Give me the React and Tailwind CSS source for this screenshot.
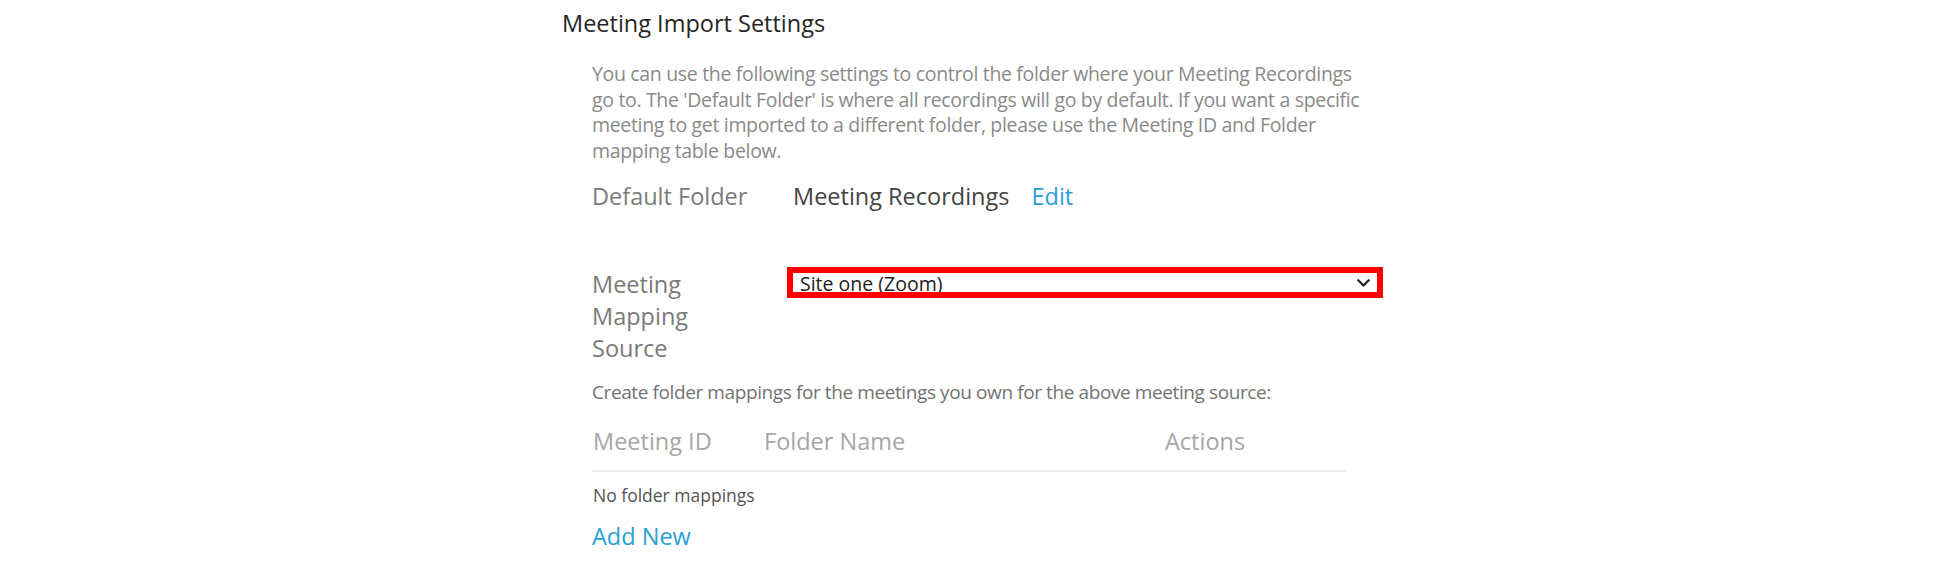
import React from "react";

export default function App() {
  return (
    <div className="w-full min-h-[566px] bg-white">
      <div className="mx-auto w-[810px] pt-[7px] font-['Open_Sans',sans-serif]">
        <h1 className="text-[23.5px] leading-[32px] text-[#262626] font-normal">
          Meeting Import Settings
        </h1>

        <div className="pl-[30px]">
          <p className="mt-[22px] w-[800px] whitespace-nowrap text-[19.5px] leading-[25.5px] tracking-[-0.33px] text-[#8a8a8a]">
            You can use the following settings to control the folder where your Meeting Recordings
            <br />
            go to. The 'Default Folder' is where all recordings will go by default. If you want a specific
            <br />
            meeting to get imported to a different folder, please use the Meeting ID and Folder
            <br />
            mapping table below.
          </p>

          <div className="mt-[17px] flex text-[23.5px] leading-[32px]">
            <div className="w-[195px] shrink-0 text-[#7a7a7a]">Default Folder</div>
            <div className="pl-[6px] text-[#444444]">Meeting Recordings</div>
            <div className="ml-[22px] text-[#2a9fd6]">Edit</div>
          </div>

          <div className="mt-[55px] flex items-start">
            <div className="w-[165px] mr-[30px] shrink-0 mt-[1px] text-[23.5px] leading-[32px] text-[#7a7a7a]">
              Meeting Mapping Source
            </div>
            <div className="w-[596px] h-[31px] shrink-0 border-[6px] border-[#ff0000] bg-white flex items-start justify-between pl-[7px] pr-[7px] overflow-hidden">
              <span className="mt-[1px] text-[19.5px] leading-[19px] text-[#222222] whitespace-nowrap">
                Site one (Zoom)
              </span>
              <svg width="13" height="8" viewBox="0 0 13 8" className="mt-[6px] shrink-0">
                <polyline
                  points="1.3,1.3 6.5,6.5 11.7,1.3"
                  fill="none"
                  stroke="#222222"
                  strokeWidth="2.3"
                  strokeLinecap="round"
                  strokeLinejoin="round"
                />
              </svg>
            </div>
          </div>

          <p className="mt-[16px] whitespace-nowrap text-[19px] leading-[25.5px] tracking-[-0.4px] text-[#727272]">
            Create folder mappings for the meetings you own for the above meeting source:
          </p>

          <div className="w-[755px]">
            <div className="mt-[19px] grid grid-cols-[172px_401px_1fr] text-[23.5px] leading-[32px] text-[#a6a6a6]">
              <div className="pl-[1px]">Meeting ID</div>
              <div>Folder Name</div>
              <div>Actions</div>
            </div>
            <div className="mt-[13px] h-[2px] bg-[#ececec]" />
          </div>

          <div className="mt-[11px] pl-[1px] text-[17.5px] leading-[24px] text-[#555555]">
            No folder mappings
          </div>

          <div className="mt-[13px] text-[23.5px] leading-[32px] text-[#2a9fd6]">
            Add New
          </div>
        </div>
      </div>
    </div>
  );
}
